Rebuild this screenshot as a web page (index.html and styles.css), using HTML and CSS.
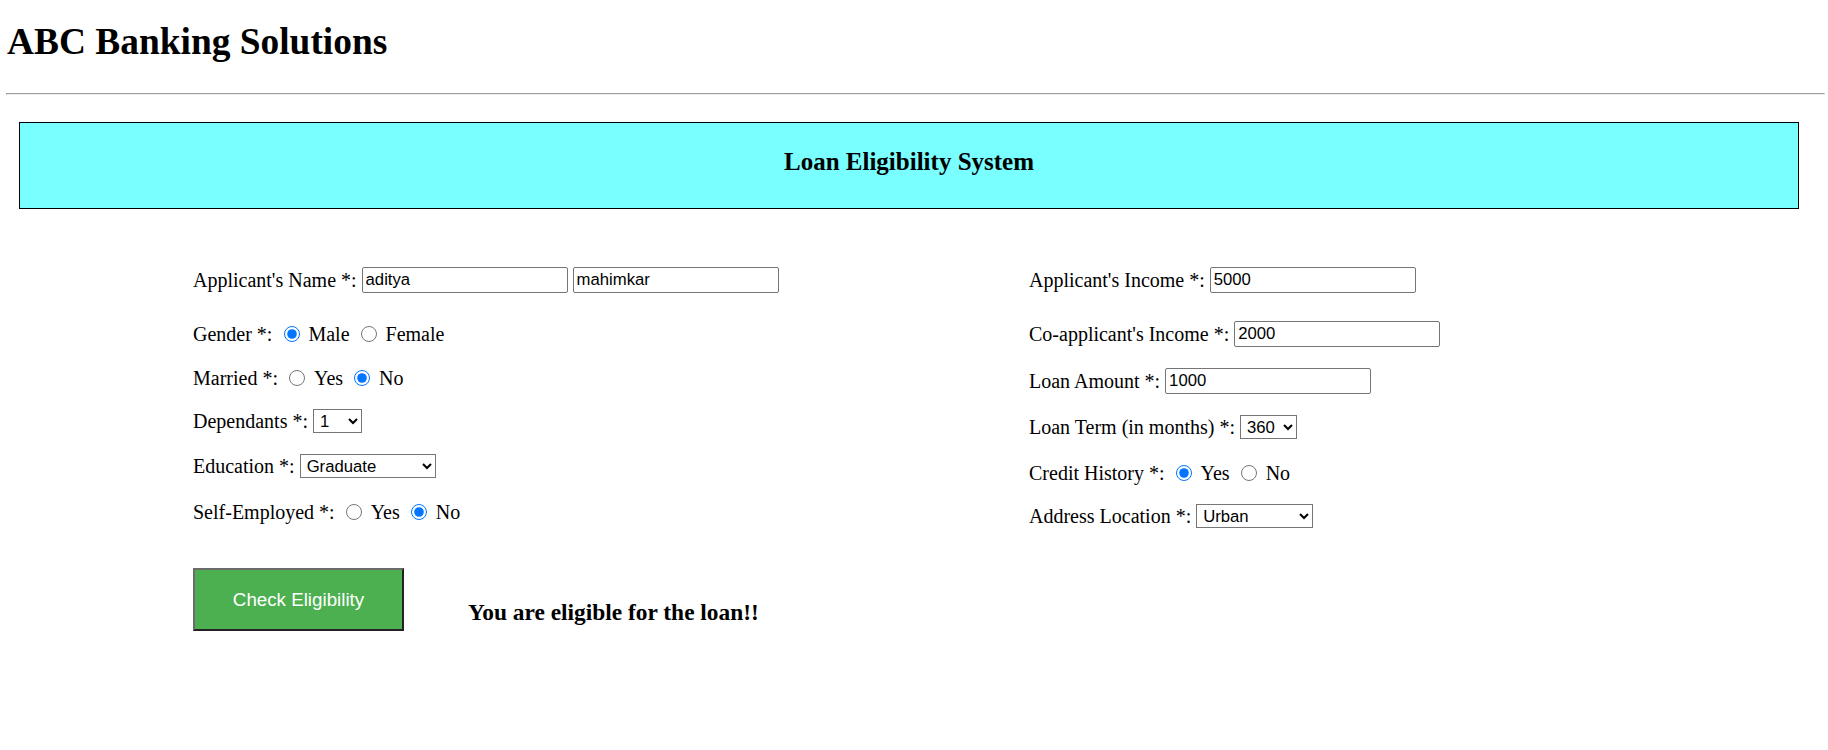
FILE: index.html
```html
<!DOCTYPE html>
<html lang="en">
<head>
<meta charset="utf-8">
<title>ABC Banking Solutions</title>
<link rel="stylesheet" href="styles.css">
</head>
<body>
<h1 class="brand">ABC Banking Solutions</h1>
<hr class="rule">
<div class="banner"><h3 class="banner-title">Loan Eligibility System</h3></div>
<form class="loan-form">
  <div class="columns">
    <div class="col">
      <div class="field field-first">
        <label class="lbl">Applicant's Name *:</label>
        <input class="text-input" type="text" value="aditya">
        <input class="text-input" type="text" value="mahimkar">
      </div>
      <div class="field field-radio">
        <span class="lbl">Gender *:</span>
        <input class="radio" type="radio" name="gender" checked><span>Male</span>
        <input class="radio" type="radio" name="gender"><span>Female</span>
      </div>
      <div class="field field-radio">
        <span class="lbl">Married *:</span>
        <input class="radio" type="radio" name="married"><span>Yes</span>
        <input class="radio" type="radio" name="married" checked><span>No</span>
      </div>
      <div class="field">
        <label class="lbl">Dependants *:</label>
        <select class="select sel-dep"><option>1</option></select>
      </div>
      <div class="field">
        <label class="lbl">Education *:</label>
        <select class="select sel-edu"><option>Graduate</option></select>
      </div>
      <div class="field field-radio">
        <span class="lbl">Self-Employed *:</span>
        <input class="radio" type="radio" name="self"><span>Yes</span>
        <input class="radio" type="radio" name="self" checked><span>No</span>
      </div>
    </div>
    <div class="col">
      <div class="field field-first">
        <label class="lbl">Applicant's Income *:</label>
        <input class="text-input" type="text" value="5000">
      </div>
      <div class="field">
        <label class="lbl">Co-applicant's Income *:</label>
        <input class="text-input" type="text" value="2000">
      </div>
      <div class="field">
        <label class="lbl">Loan Amount *:</label>
        <input class="text-input" type="text" value="1000">
      </div>
      <div class="field">
        <label class="lbl">Loan Term (in months) *:</label>
        <select class="select sel-term"><option>360</option></select>
      </div>
      <div class="field field-radio">
        <span class="lbl">Credit History *:</span>
        <input class="radio" type="radio" name="credit" checked><span>Yes</span>
        <input class="radio" type="radio" name="credit"><span>No</span>
      </div>
      <div class="field">
        <label class="lbl">Address Location *:</label>
        <select class="select sel-addr"><option>Urban</option></select>
      </div>
    </div>
  </div>
  <div class="actions">
    <button class="check-btn" type="button">Check Eligibility</button>
    <h3 class="result">You are eligible for the loan!!</h3>
  </div>
</form>
</body>
</html>
```
FILE: styles.css
```css
body {
  margin: 0;
  font-family: "Liberation Serif", "Times New Roman", serif;
  font-size: 20px;
  color: #000;
  background: #fff;
}

.brand {
  margin: 20px 0 0 7px;
  font-size: 37.4px;
  line-height: 44px;
  font-weight: bold;
}

.rule {
  margin: 29px 3px 0 6px;
  height: 0;
  border-style: solid;
  border-width: 1px;
  border-color: #a0a0a0 #ececec #ececec #a0a0a0;
}

.banner {
  margin: 27px 29px 0 19px;
  height: 87px;
  box-sizing: border-box;
  border: 1px solid #000;
  background: #79ffff;
  padding-top: 24px;
}

.banner-title {
  margin: 0;
  text-align: center;
  font-size: 25px;
  line-height: 29px;
  font-weight: bold;
}

.loan-form {
  margin: 58px 0 0 193px;
}

.columns {
  display: grid;
  grid-template-columns: 836px auto;
}

.col {
  display: flex;
  flex-direction: column;
  align-items: flex-start;
  gap: 21px;
}

.field {
  display: flex;
  align-items: center;
  white-space: nowrap;
  line-height: 23px;
}

.field-first {
  margin-bottom: 7px;
}

.field-radio {
  padding-top: 2px;
  margin-bottom: -2px;
}

.text-input {
  width: 206px;
  height: 26px;
  box-sizing: border-box;
  margin: 0 0 0 5px;
  padding: 1px 3px;
  border: 1px solid #767676;
  border-radius: 2px;
  background: #fff;
  color: #000;
  font-family: "Liberation Sans", Arial, sans-serif;
  font-size: 16.7px;
}

.radio {
  width: 16px;
  height: 16px;
  margin: 0 8.75px 2px 11.25px;
}

.select {
  height: 24px;
  box-sizing: border-box;
  margin: 0 0 0 5px;
  padding: 0 0 0 2px;
  border: 1px solid #767676;
  border-radius: 0;
  background: #fff;
  color: #000;
  font-family: "Liberation Sans", Arial, sans-serif;
  font-size: 16.7px;
}

.sel-dep { width: 49px; }
.sel-edu { width: 136px; }
.sel-term { width: 57px; }
.sel-addr { width: 117px; }

.actions {
  display: flex;
  align-items: flex-start;
  margin-top: 40px;
}

.check-btn {
  width: 211px;
  height: 63px;
  box-sizing: border-box;
  padding: 0;
  background: #4caf50;
  color: #fff;
  font-family: "Liberation Sans", Arial, sans-serif;
  font-size: 18.75px;
  border-style: solid;
  border-width: 2px;
  border-color: #6b6b6b #222 #222 #6b6b6b;
}

.result {
  margin: 31px 0 0 64px;
  font-size: 23.4px;
  line-height: 27px;
  font-weight: bold;
}
```
